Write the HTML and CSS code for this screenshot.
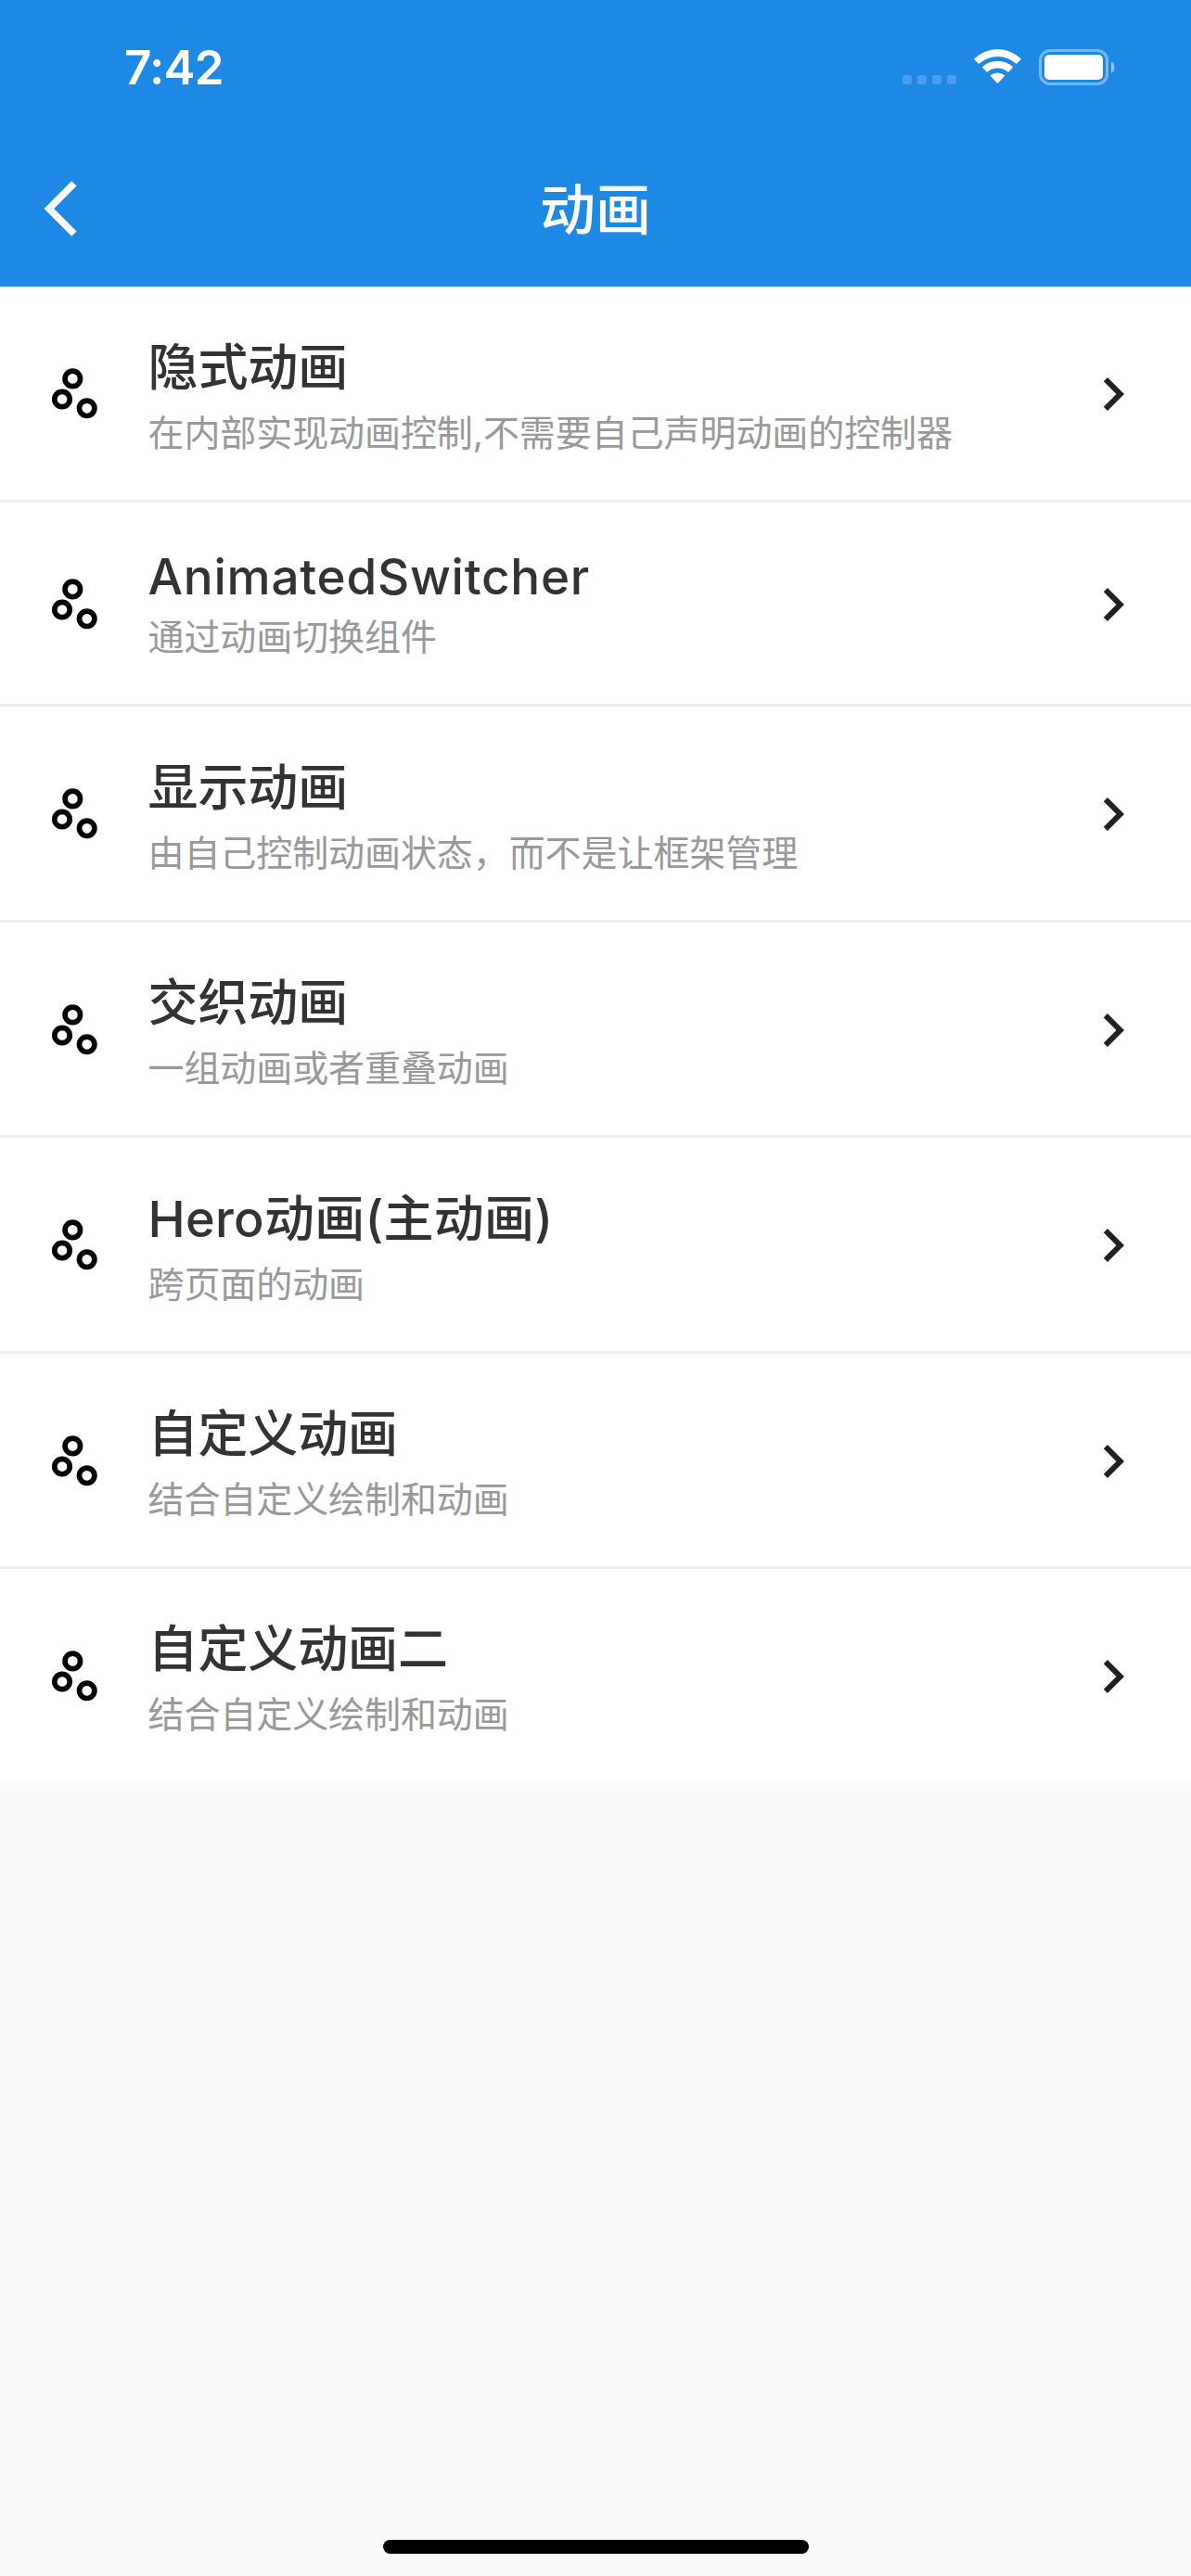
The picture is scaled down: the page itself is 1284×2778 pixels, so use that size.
FILE: index.html
```html
<!DOCTYPE html>
<html lang="zh-CN">
<head>
<meta charset="utf-8">
<title>动画</title>
<link rel="stylesheet" href="styles.css">
</head>
<body>
<svg class="defs" width="0" height="0">
  <symbol id="scatter" viewBox="0 0 72 72"><g fill="none" stroke="#000" stroke-width="5.7"><circle cx="23" cy="41.5" r="8.2"/><circle cx="34.3" cy="19.4" r="8.2"/><circle cx="49.7" cy="51.3" r="8.2"/></g></symbol>
  <symbol id="chevron" viewBox="0 0 24 24"><path fill="#212121" d="M10 6L8.59 7.41 13.17 12l-4.58 4.59L10 18l6-6z"/></symbol>
</svg>
<header class="header">
  <div class="status">
    <span class="time">7:42</span>
    <div class="indicators">
      <div class="signal"><i></i><i></i><i></i><i></i></div>
      <svg class="wifi" width="51" height="38" viewBox="0 0 51 38" fill="#fff"><path d="M0.3 11.2 Q0 10.7 .5 10.2 A36 36 0 0 1 50.5 10.2 Q51 10.7 50.6 11.2 L46.2 15.6 Q45.7 16 45.2 15.6 A29 29 0 0 0 5.8 15.6 Q5.3 16 4.8 15.6 Z"/><path d="M9.2 20 Q8.8 19.5 9.3 19 A24 24 0 0 1 41.7 19 Q42.2 19.5 41.8 20 L37.3 24.5 Q36.8 24.9 36.3 24.5 A16.5 16.5 0 0 0 14.7 24.5 Q14.2 24.9 13.7 24.5 Z"/><path d="M18 28.9 Q17.6 28.4 18.1 28 A12 12 0 0 1 32.9 28 Q33.4 28.4 33 28.9 L26.1 36.5 Q25.5 37.1 24.9 36.5 Z"/></svg>
      <svg class="battery" width="82" height="39" viewBox="0 0 82 39"><rect x="1.5" y="1.5" width="72" height="36" rx="10.5" fill="none" stroke="#fff" stroke-opacity=".4" stroke-width="3"/><rect x="6" y="6" width="63" height="27" rx="5" fill="#fff"/><path d="M78 13.3 a5.2 6.6 0 0 1 0 12.4z" fill="#fff" fill-opacity=".5"/></svg>
    </div>
  </div>
  <nav class="bar">
    <svg class="back" viewBox="0 0 24 24"><path fill="#fff" d="M17.51 3.87L15.73 2.1 5.84 12l9.9 9.9 1.77-1.77L9.38 12z"/></svg>
    <h1 class="title">动画</h1>
  </nav>
</header>
<main class="list">
  <section class="row"><svg class="icon"><use href="#scatter"/></svg><div class="text"><h2>隐式动画</h2><p>在内部实现动画控制,不需要自己声明动画的控制器</p></div><svg class="icon"><use href="#chevron"/></svg></section>
  <section class="row latin"><svg class="icon"><use href="#scatter"/></svg><div class="text"><h2>AnimatedSwitcher</h2><p>通过动画切换组件</p></div><svg class="icon"><use href="#chevron"/></svg></section>
  <section class="row"><svg class="icon"><use href="#scatter"/></svg><div class="text"><h2>显示动画</h2><p>由自己控制动画状态，而不是让框架管理</p></div><svg class="icon"><use href="#chevron"/></svg></section>
  <section class="row"><svg class="icon"><use href="#scatter"/></svg><div class="text"><h2>交织动画</h2><p>一组动画或者重叠动画</p></div><svg class="icon"><use href="#chevron"/></svg></section>
  <section class="row mixed"><svg class="icon"><use href="#scatter"/></svg><div class="text"><h2>Hero动画(主动画)</h2><p>跨页面的动画</p></div><svg class="icon"><use href="#chevron"/></svg></section>
  <section class="row"><svg class="icon"><use href="#scatter"/></svg><div class="text"><h2>自定义动画</h2><p>结合自定义绘制和动画</p></div><svg class="icon"><use href="#chevron"/></svg></section>
  <section class="row"><svg class="icon"><use href="#scatter"/></svg><div class="text"><h2>自定义动画二</h2><p>结合自定义绘制和动画</p></div><svg class="icon"><use href="#chevron"/></svg></section>
</main>
<footer class="footer"><div class="home"></div></footer>
</body>
</html>
```
FILE: styles.css
```css
* { box-sizing: border-box; margin: 0; padding: 0; }
body {
  width: 1284px;
  height: 2778px;
  display: flex;
  flex-direction: column;
  overflow: hidden;
  background: #fafafa;
  font-family: Inter, "Noto Sans CJK SC", sans-serif;
}
.defs { position: absolute; }
.header { height: 309px; background: #1e88e5; color: #fff; }
.status {
  height: 141px;
  padding: 0 82px 0 134px;
  display: flex;
  justify-content: space-between;
}
.time { padding-top: 42px; font-size: 51px; line-height: 62px; font-weight: 600; letter-spacing: -.7px; }
.indicators { display: flex; align-items: flex-start; padding-top: 53px; }
.signal { display: flex; gap: 6px; padding-top: 28px; margin-right: 19px; }
.signal i { width: 10px; height: 10px; border-radius: 3px; background: rgba(255, 255, 255, .2); }
.wifi { margin-right: 19px; }
.bar {
  height: 168px;
  padding: 0 30px;
  display: grid;
  grid-template-columns: 72px 1fr 72px;
  align-items: center;
}
.back { width: 72px; height: 72px; }
.title { padding-top: 1px; text-align: center; font-size: 60px; line-height: 84px; font-weight: 500; }
.list { background: #fff; }
.row {
  height: 232.5px;
  padding: 0 48px 0 44px;
  display: flex;
  align-items: center;
  box-shadow: inset 0 -3px #eee;
}
.row.latin { height: 220.5px; }
.row:last-child { height: 231px; box-shadow: none; }
.icon { width: 72px; height: 72px; flex: none; }
.text { flex: 1; padding-left: 43.5px; white-space: nowrap; }
.text h2 { padding-top: 2px; font-size: 54px; line-height: 75px; font-weight: 460; color: #333; letter-spacing: -.1px; }
.text p { font-size: 39px; line-height: 54px; margin-top: 6px; font-weight: 400; color: #999; letter-spacing: -.08px; }
.latin .text h2 { padding-top: 1px; font-size: 53px; line-height: 63px; letter-spacing: .75px; }
.mixed .text h2 { letter-spacing: .25px; }
.footer { flex: 1; display: flex; justify-content: center; align-items: flex-end; padding-bottom: 24px; }
.home { width: 459px; height: 15px; border-radius: 8px; background: #000; }
```
